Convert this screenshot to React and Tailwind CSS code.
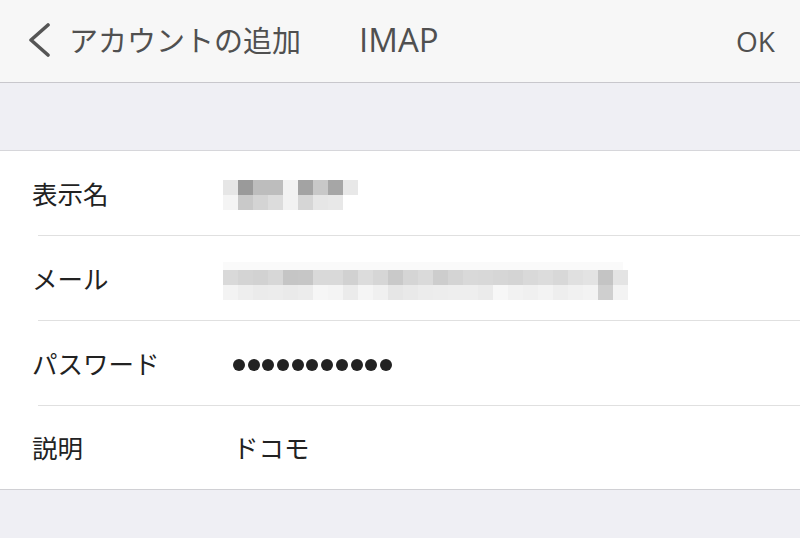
import React from "react";

const jp = "font-['Noto_Sans_CJK_JP','Noto_Sans',sans-serif]";
const latin = "font-['Open_Sans','Noto_Sans_CJK_JP',sans-serif]";

// pixelated (mosaic) values, one class per 15px cell
const nameCells = [
  ["bg-[#e6e6e6]", "bg-[#9a9a9a]", "bg-[#bdbdbd]", "bg-[#bdbdbd]", "bg-[#f2f2f2]", "bg-[#a3a3a3]", "bg-[#c8c8c8]", "bg-[#a6a6a6]", "bg-[#e8e8e8]"],
  ["bg-[#f4f4f4]", "bg-[#c9c9c9]", "bg-[#d4d4d4]", "bg-[#dcdcdc]", "bg-[#f2f2f2]", "bg-[#d6d6d6]", "bg-[#e6e6e6]", "bg-[#e8e8e8]", "bg-white"],
];

const mailCells = [
  [
    "bg-[#d9d9d9]", "bg-[#d4d4d4]", "bg-[#d2d2d2]", "bg-[#d7d7d7]", "bg-[#c5c5c5]", "bg-[#c6c6c6]",
    "bg-[#d9d9d9]", "bg-[#d9d9d9]", "bg-[#d1d1d1]", "bg-[#dcdcdc]", "bg-[#d6d6d6]", "bg-[#c9c9c9]",
    "bg-[#d5d5d5]", "bg-[#dadada]", "bg-[#cdcdcd]", "bg-[#d4d4d4]", "bg-[#d9d9d9]", "bg-[#d8d8d8]",
    "bg-[#d6d6d6]", "bg-[#d4d4d4]", "bg-[#d9d9d9]", "bg-[#dcdcdc]", "bg-[#d8d8d8]", "bg-[#e0e0e0]",
    "bg-[#e3e3e3]", "bg-[#c4c4c4]", "bg-[#e4e4e4]",
  ],
  [
    "bg-[#f3f3f3]", "bg-[#eeeeee]", "bg-[#ebebeb]", "bg-[#ececec]", "bg-[#eaeaea]", "bg-[#ececec]",
    "bg-[#f6f6f6]", "bg-[#f4f4f4]", "bg-[#ebebeb]", "bg-[#f5f5f5]", "bg-[#f0f0f0]", "bg-[#e6e6e6]",
    "bg-[#e9e9e9]", "bg-[#ececec]", "bg-[#ededed]", "bg-[#eeeeee]", "bg-[#eeeeee]", "bg-[#ebebeb]",
    "bg-[#f7f7f7]", "bg-[#f2f2f2]", "bg-[#f0f0f0]", "bg-[#f3f3f3]", "bg-[#eeeeee]", "bg-[#f1f1f1]",
    "bg-[#f3f3f3]", "bg-[#cfcfcf]", "bg-[#f3f3f3]",
  ],
];

const Mosaic = ({ rows }) => (
  <div className="flex flex-col">
    {rows.map((row, i) => (
      <div key={i} className="flex">
        {row.map((c, j) => (
          <div key={j} className={`w-[15px] h-[15px] ${c}`} />
        ))}
      </div>
    ))}
  </div>
);

const labelCls = `-ml-[6px] text-[25.5px] text-[#222] ${jp}`;

const App = () => {
  return (
    <div className="w-[800px] h-[538px] bg-[#efeff4] overflow-hidden">
      {/* Nav bar */}
      <div className="h-[83px] bg-[#f7f7f7] border-b border-[#c8c7cc] flex items-center text-[#505050]">
        <svg className="ml-[26px] w-[26px] h-[34px] -mt-[2px]" viewBox="0 0 26 34" fill="none">
          <path d="M22 2 L5 17 L22 32" stroke="#555" strokeWidth="3.6" strokeLinecap="round" strokeLinejoin="round" />
        </svg>
        <span className={`ml-[17px] text-[29px] -mt-[2px] ${jp}`}>アカウントの追加</span>
        <span className={`ml-[58px] text-[33px] -mt-[2px] ${latin}`}>IMAP</span>
        <span className={`ml-auto mr-[25px] text-[28px] ${latin}`}>OK</span>
      </div>

      <div className="h-[68px] border-b border-[#d6d6da]" />

      {/* Form */}
      <div className="bg-white border-b border-[#d0d0d4]">
        <div className="h-[85px] flex items-center border-b border-[#e0e0e0] ml-[38px]">
          <span className={`w-[191px] ${labelCls}`}>表示名</span>
          <div className="mt-[3px]">
            <Mosaic rows={nameCells} />
          </div>
        </div>
        <div className="h-[85px] flex items-center border-b border-[#e0e0e0] ml-[38px]">
          <span className={`w-[191px] ${labelCls}`}>メール</span>
          <div className="mt-[6px] flex flex-col">
            <div className="h-[8px] w-[400px] bg-[#fafafa]" />
            <Mosaic rows={mailCells} />
          </div>
        </div>
        <div className="h-[85px] flex items-center border-b border-[#e0e0e0] ml-[38px]">
          <span className={`w-[201px] ${labelCls}`}>パスワード</span>
          <div className="flex gap-[2.7px] mt-[4px]">
            {Array.from({ length: 11 }).map((_, i) => (
              <div key={i} className="w-[12px] h-[12px] rounded-full bg-[#222]" />
            ))}
          </div>
        </div>
        <div className="h-[83px] flex items-center ml-[38px]">
          <span className={`w-[201px] ${labelCls}`}>説明</span>
          <span className={`text-[25.5px] text-[#222] ${jp}`}>ドコモ</span>
        </div>
      </div>
    </div>
  );
};

export default App;
